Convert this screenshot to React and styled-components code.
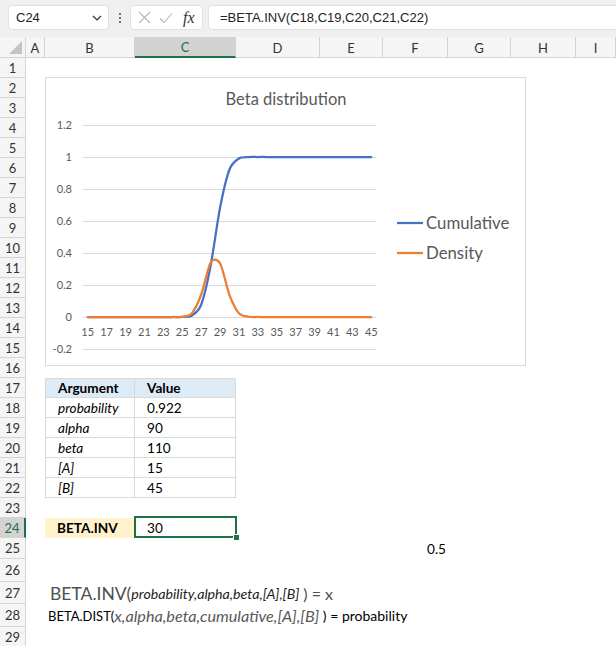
import React from 'react'
import styled, { createGlobalStyle } from 'styled-components'

const GlobalStyle = createGlobalStyle`
  html, body {
    margin: 0;
    padding: 0;
    background: #fff;
  }
  body {
    font-family: Lato, "Liberation Sans", sans-serif;
    overflow: hidden;
  }
`

const COLS = '26px 19px 90px 101px 84px 63px 65px 63px 65px 40px'
const GREEN = '#1e7145'
const LINE = '#d4d4d4'

// ---- toolbar ----
const Toolbar = styled.div`
  height: 37px;
  box-sizing: border-box;
  background: #f0f0f0;
  display: flex;
  align-items: flex-start;
  padding: 5px 0 0 8px;
  overflow: hidden;
  font-family: "Liberation Sans", Arial, sans-serif;
  font-size: 13px;
  color: #222;
`

const Box = styled.div`
  height: 25px;
  box-sizing: border-box;
  background: #fff;
  border: 1px solid #e1e1e1;
  border-radius: 4px;
  display: flex;
  align-items: center;
`

const NameBox = styled(Box)`
  width: 101px;
  padding: 0 6px 0 7px;
  justify-content: space-between;
`

const Dots = styled.div`
  width: 21px;
  height: 25px;
  display: flex;
  flex-direction: column;
  align-items: center;
  justify-content: center;
  gap: 2px;
  span {
    width: 2px;
    height: 2px;
    border-radius: 1px;
    background: #444;
  }
`

const FxBox = styled(Box)`
  width: 73px;
  padding: 0 6px 0 7px;
  gap: 8px;
`

const Fx = styled.span`
  font-family: "Liberation Serif", "DejaVu Serif", serif;
  font-style: italic;
  font-size: 16px;
  color: #333;
  margin-left: 2px;
`

const FormulaBox = styled(Box)`
  flex: 1;
  margin-left: 5px;
  margin-right: -10px;
  padding-left: 11px;
`

// ---- sheet ----
const Sheet = styled.div`
  position: relative;
  font-family: Lato, "Liberation Sans", sans-serif;
`

const Row = styled.div`
  display: grid;
  grid-template-columns: ${COLS};
  height: ${p => p.$h}px;
`

const ColHead = styled.div`
  box-sizing: border-box;
  background: ${p => (p.$active ? '#d3d3d3' : '#f5f5f5')};
  border-right: 1px solid ${LINE};
  border-bottom: ${p => (p.$active ? `2px solid ${GREEN}` : `1px solid ${LINE}`)};
  color: ${p => (p.$active ? GREEN : '#333')};
  font-size: 13px;
  display: flex;
  align-items: center;
  justify-content: center;
  padding-top: 1px;
`

const Corner = styled(ColHead)`
  position: relative;
  svg {
    position: absolute;
    right: 3px;
    bottom: 3px;
  }
`

const RowHead = styled.div`
  box-sizing: border-box;
  background: ${p => (p.$active ? '#d3d3d3' : '#f5f5f5')};
  border-right: ${p => (p.$active ? `2px solid ${GREEN}` : `1px solid ${LINE}`)};
  border-bottom: 1px solid ${LINE};
  color: ${p => (p.$active ? GREEN : '#333')};
  font-size: 13px;
  display: flex;
  align-items: center;
  justify-content: center;
`

const Cell = styled.div`
  position: relative;
  box-sizing: border-box;
  display: flex;
  align-items: center;
  justify-content: ${p => (p.$right ? 'flex-end' : 'flex-start')};
  padding: 0 ${p => (p.$right ? 2 : 0)}px 0 ${p => p.$pad ?? 4}px;
  white-space: nowrap;
  font-size: 13.6px;
  font-weight: ${p => (p.$bold ? 700 : 400)};
  font-style: ${p => (p.$italic ? 'italic' : 'normal')};
  background: ${p => p.$fill || 'transparent'};
  color: #000;
  z-index: 1;
`

const TableCell = styled(Cell)`
  border-right: 1px solid #d9d9d9;
  border-bottom: 1px solid #d9d9d9;
  border-left: ${p => (p.$first ? '1px solid #d9d9d9' : 'none')};
  border-top: ${p => (p.$top ? '1px solid #d9d9d9' : 'none')};
`

const SelectedCell = styled(Cell)`
  &::before {
    content: '';
    position: absolute;
    top: -2px;
    left: -1px;
    right: -1px;
    bottom: 0;
    border: 2px solid ${GREEN};
  }
  &::after {
    content: '';
    position: absolute;
    right: -4px;
    bottom: -3px;
    width: 5px;
    height: 5px;
    background: ${GREEN};
    border: 1px solid #fff;
  }
`

const Fn = styled.span`
  font-size: ${p => p.$size}px;
  color: ${p => p.$color};
  font-style: ${p => (p.$italic ? 'italic' : 'normal')};
  white-space: pre;
`

// ---- chart ----
const ChartFrame = styled.div`
  position: absolute;
  left: 45px;
  top: 40px;
  width: 479px;
  height: 287px;
  background: #fff;
  border: 1px solid #d9d9d9;
  z-index: 2;
  svg {
    display: block;
  }
  text {
    font-family: Lato, "Liberation Sans", sans-serif;
    fill: #595959;
  }
`

function lgamma(z) {
  const c = [0.99999999999980993, 676.5203681218851, -1259.1392167224028, 771.32342877765313,
    -176.61502916214059, 12.507343278686905, -0.13857109526572012, 9.9843695780195716e-6, 1.5056327351493116e-7]
  z -= 1
  let x = c[0]
  for (let i = 1; i < 9; i++) x += c[i] / (z + i)
  const t = z + 7.5
  return 0.5 * Math.log(2 * Math.PI) + (z + 0.5) * Math.log(t) - t + Math.log(x)
}

const AL = 90
const BE = 110
const LO = 15
const HI = 45
const lnNorm = lgamma(AL + BE) - lgamma(AL) - lgamma(BE)
const pdfStd = t => (t <= 0 || t >= 1 ? 0 : Math.exp(lnNorm + (AL - 1) * Math.log(t) + (BE - 1) * Math.log(1 - t)))
const density = x => pdfStd((x - LO) / (HI - LO)) / (HI - LO)
const cumulative = x => {
  const t = (x - LO) / (HI - LO)
  const n = 4000
  const h = t / n
  let s = 0
  for (let i = 0; i < n; i++) s += pdfStd((i + 0.5) * h)
  return Math.min(1, s * h)
}

const xs = []
for (let c = LO; c <= HI; c++) xs.push(c)

const GX1 = 37
const GX2 = 330
const STEP = (GX2 - GX1) / xs.length
const px = c => GX1 + (c - LO + 0.5) * STEP
const py = v => 239 - 160 * v

// smoothed line like Excel's "smoothed line" option
function smoothPath(pts, k = 0.14) {
  let d = `M${pts[0][0].toFixed(2)},${pts[0][1].toFixed(2)}`
  for (let i = 0; i < pts.length - 1; i++) {
    const p0 = pts[i - 1] || pts[i]
    const p1 = pts[i]
    const p2 = pts[i + 1]
    const p3 = pts[i + 2] || p2
    const c1 = [p1[0] + (p2[0] - p0[0]) * k, p1[1] + (p2[1] - p0[1]) * k]
    const c2 = [p2[0] - (p3[0] - p1[0]) * k, p2[1] - (p3[1] - p1[1]) * k]
    d += ` C${c1[0].toFixed(2)},${c1[1].toFixed(2)} ${c2[0].toFixed(2)},${c2[1].toFixed(2)} ${p2[0].toFixed(2)},${p2[1].toFixed(2)}`
  }
  return d
}

const cumPath = smoothPath(xs.map(c => [px(c), py(cumulative(c))]))
const denPath = smoothPath(xs.map(c => [px(c), py(density(c))]))

const yTicks = [1.2, 1, 0.8, 0.6, 0.4, 0.2, 0, -0.2]

const Chart = () => (
  <ChartFrame>
    <svg width="479" height="287" viewBox="0 0 479 287">
      <text x="240" y="27" fontSize="16.5" textAnchor="middle">Beta distribution</text>
      {yTicks.map(v => (
        <g key={v}>
          <line x1={GX1} x2={GX2} y1={py(v) + 0.5} y2={py(v) + 0.5} stroke="#d9d9d9" strokeWidth="1" />
          <text x="26" y={py(v) + 4} fontSize="11" textAnchor="end">{v}</text>
        </g>
      ))}
      {xs.filter((c, i) => i % 2 === 0).map(c => (
        <text key={c} x={px(c)} y="258" fontSize="11" textAnchor="middle">{c}</text>
      ))}
      <path d={cumPath} fill="none" stroke="#4472c4" strokeWidth="2.25" strokeLinecap="round" strokeLinejoin="round" />
      <path d={denPath} fill="none" stroke="#ed7d31" strokeWidth="2.25" strokeLinecap="round" strokeLinejoin="round" />
      <line x1="351" x2="377" y1="145" y2="145" stroke="#4472c4" strokeWidth="2.25" />
      <text x="380" y="151" fontSize="16.8">Cumulative</text>
      <line x1="351" x2="377" y1="175" y2="175" stroke="#ed7d31" strokeWidth="2.25" />
      <text x="380" y="181" fontSize="16.8">Density</text>
    </svg>
  </ChartFrame>
)

const colLetters = ['A', 'B', 'C', 'D', 'E', 'F', 'G', 'H', 'I']
const heights = { 25: 21, 26: 23, 27: 22, 28: 23, 29: 21 }

const tableRows = [
  ['probability', '0.922'],
  ['alpha', '90'],
  ['beta', '110'],
  ['[A]', '15'],
  ['[B]', '45'],
]

function rowCells(n) {
  if (n === 17) {
    return [
      <Cell key="a" />,
      <TableCell key="b" $first $top $pad={12} $bold $fill="#ddebf7">Argument</TableCell>,
      <TableCell key="c" $top $pad={12} $bold $fill="#ddebf7">Value</TableCell>,
    ]
  }
  if (n >= 18 && n <= 22) {
    const [arg, val] = tableRows[n - 18]
    return [
      <Cell key="a" />,
      <TableCell key="b" $first $pad={12} $italic>{arg}</TableCell>,
      <TableCell key="c" $pad={12}>{val}</TableCell>,
    ]
  }
  if (n === 24) {
    return [
      <Cell key="a" />,
      <Cell key="b" $pad={12} $bold $fill="#fff2cc">BETA.INV</Cell>,
      <SelectedCell key="c" $pad={12}>30</SelectedCell>,
    ]
  }
  if (n === 25) {
    return [<Cell key="a" />, <Cell key="b" />, <Cell key="c" />, <Cell key="d" />, <Cell key="e" />,
      <Cell key="f" $right>0.5</Cell>]
  }
  if (n === 27) {
    return [
      <Cell key="a" />,
      <Cell key="b" $pad={5}>
        <Fn $size={17.5} $color="#505050">BETA.INV(</Fn>
        <Fn $size={14.2} $color="#222" $italic>probability,alpha,beta,[A],[B]</Fn>
        <Fn $size={16} $color="#505050"> ) = x</Fn>
      </Cell>,
    ]
  }
  if (n === 28) {
    return [
      <Cell key="a" />,
      <Cell key="b" $pad={3}>
        <Fn $size={13} $color="#000">BETA.DIST(</Fn>
        <Fn $size={16.2} $color="#595959" $italic>x,alpha,beta,cumulative,[A],[B]</Fn>
        <Fn $size={14} $color="#000"> ) = probability</Fn>
      </Cell>,
    ]
  }
  return null
}

const rows = []
for (let n = 1; n <= 29; n++) rows.push(n)

export default function App() {
  return (
    <>
      <GlobalStyle />
      <Toolbar>
        <NameBox>
          <span>C24</span>
          <svg width="10" height="6" viewBox="0 0 10 6">
            <path d="M1 1 L5 5 L9 1" fill="none" stroke="#333" strokeWidth="1.2" />
          </svg>
        </NameBox>
        <Dots><span /><span /><span /></Dots>
        <FxBox>
          <svg width="13" height="13" viewBox="0 0 13 13">
            <path d="M1 1 L12 12 M12 1 L1 12" stroke="#b5b5b5" strokeWidth="1.1" />
          </svg>
          <svg width="14" height="12" viewBox="0 0 14 12">
            <path d="M1 6.5 L5 10.5 L13 1.5" fill="none" stroke="#b5b5b5" strokeWidth="1.1" />
          </svg>
          <Fx>fx</Fx>
        </FxBox>
        <FormulaBox>=BETA.INV(C18,C19,C20,C21,C22)</FormulaBox>
      </Toolbar>
      <Sheet>
        <Row $h={21}>
          <Corner>
            <svg width="13" height="13" viewBox="0 0 13 13">
              <polygon points="13,0 13,13 0,13" fill="#c4c4c4" />
            </svg>
          </Corner>
          {colLetters.map(l => (
            <ColHead key={l} $active={l === 'C'}>{l}</ColHead>
          ))}
        </Row>
        {rows.map(n => (
          <Row key={n} $h={heights[n] || 20}>
            <RowHead $active={n === 24}>{n}</RowHead>
            {rowCells(n)}
          </Row>
        ))}
        <Chart />
      </Sheet>
    </>
  )
}
